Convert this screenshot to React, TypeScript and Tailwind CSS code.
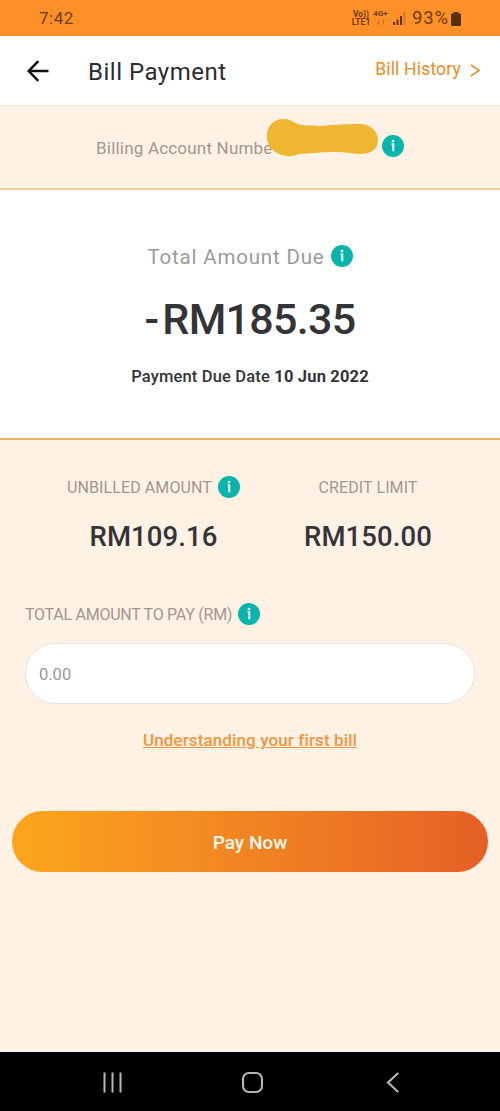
import { ReactNode } from "react";

function InfoIcon() {
  return (
    <svg className="h-[22px] w-[22px] shrink-0" viewBox="0 0 22 22" aria-label="More info">
      <circle cx="11" cy="11" r="11" fill="#08b5ad" />
      <circle cx="11" cy="6" r="1.35" fill="#fff" />
      <path d="M9.6 9.3H11.3V16.2" fill="none" stroke="#fff" strokeWidth="2" />
    </svg>
  );
}

function StatusBar() {
  return (
    <div className="flex h-9 items-center justify-between bg-[#ff9028] pr-[39px] pl-[39px] text-[#6d3d12]">
      <span className="text-[17px] leading-none tracking-[0.5px]">7:42</span>
      <div className="flex items-center">
        <div className="flex w-[18px] flex-col items-center text-[8.5px] leading-[8px] font-bold">
          <span>Vo))</span>
          <span>LTE1</span>
        </div>
        <div className="ml-[3px] flex w-[15px] flex-col items-center text-[8px] leading-[8px] font-bold">
          <span>4G+</span>
          <svg className="h-2 w-[10px]" viewBox="0 0 10 8" fill="none" stroke="#c97526">
            <path d="M2.5 1v5M.8 4.5l1.7 1.7 1.7-1.7M7.5 7V2M5.8 3.5l1.7-1.7 1.7 1.7" />
          </svg>
        </div>
        <svg className="mt-px ml-[5px] h-[13px] w-[13px]" viewBox="0 0 13 13">
          <path d="M0 10h2v3H0zM3.5 7.5h2V13h-2zM7 4h2v9H7z" fill="#5d3310" />
          <path d="M10.5 0h1.7v13h-1.7z" fill="#cf7725" />
        </svg>
        <span className="ml-[6px] w-[39px] text-[18.5px] leading-none tracking-[0.9px] whitespace-nowrap">93%</span>
        <svg className="mt-[2px] h-[14px] w-[10px]" viewBox="0 0 10 14">
          <path d="M2.5 0h5v1.5H9q1 0 1 1V13q0 1-1 1H1q-1 0-1-1V2.5q0-1 1-1h1.5z" fill="#56300d" />
        </svg>
      </div>
    </div>
  );
}

function Header() {
  return (
    <header className="flex h-[69px] items-center bg-white pr-5 pl-[27px]">
      <button aria-label="Back">
        <svg className="h-[22px] w-[22px]" viewBox="0 0 22 22" fill="none" stroke="#111" strokeWidth="2.5">
          <path d="M21.5 11H2M11.3 1.2 1.7 11l9.6 9.8" />
        </svg>
      </button>
      <h1 className="ml-[39px] pt-[3px] text-[24px] leading-none tracking-[0.5px] text-[#2b2b30]">Bill Payment</h1>
      <button className="ml-auto flex items-center gap-[9px] text-[17.5px] leading-none text-[#f08a22]">
        <span className="-mt-[2px] tracking-[0.18px]">Bill History</span>
        <svg className="h-[13px] w-[10px]" viewBox="0 0 10 13" fill="none" stroke="currentColor" strokeWidth="1.6">
          <path d="M.8.8 9 6.5.8 12.2" />
        </svg>
      </button>
    </header>
  );
}

function AccountNumber() {
  return (
    <section className="relative flex h-[85px] items-center border-t border-b-2 border-t-[#f3e7db] border-b-[#edcf9d] pt-[2px] pl-24">
      <span className="text-[17px] leading-none tracking-[0.2px] text-[#9f9790]">Billing Account Numbe</span>
      <svg className="absolute top-[12px] left-[266px] h-[39px] w-[112px]" viewBox="0 0 112 39">
        <path
          d="M1 20C0 9 7 1 17 1c6 0 10 2 14 5 7 2 14 1 22 2 13-1 25-2 41-2 10 0 18 7 18 16s-7 14-17 14c-8 0-15-2-24-2-13 0-24 1-38 2-9 4-18 2-25-3-4-3-7-8-7-13Z"
          fill="#efb632"
        />
      </svg>
      <div className="absolute top-[29px] left-[382px]">
        <InfoIcon />
      </div>
    </section>
  );
}

function AmountDue() {
  return (
    <section className="flex h-[250px] flex-col items-center border-b-2 border-[#e4b661] bg-white pt-[55px] text-[#333338]">
      <div className="flex items-center gap-[6px]">
        <span className="pt-[2px] text-[20.5px] leading-[20px] tracking-[0.82px] text-[#9a9a9c]">Total Amount Due</span>
        <InfoIcon />
      </div>
      <p className="mt-[30px] text-[43px] leading-[44px] font-medium tracking-[-0.7px]">
        <span className="mr-1">-</span>RM185.35
      </p>
      <p className="mt-[26px] text-[16.5px] leading-5 font-medium tracking-[0.17px]">
        Payment Due Date <b className="font-bold">10 Jun 2022</b>
      </p>
    </section>
  );
}

function Stat({ label, value, icon }: { label: string; value: string; icon?: ReactNode }) {
  return (
    <div className="flex flex-col items-center">
      <div className="flex h-[22px] items-center gap-[6px]">
        <span className="pt-px text-[16px] leading-none tracking-[0.1px] whitespace-nowrap text-[#9f9790]">{label}</span>
        {icon}
      </div>
      <p className="mt-[25px] text-[27.5px] leading-7 font-medium tracking-[0.1px] text-[#333338]">{value}</p>
    </div>
  );
}

export default function App() {
  return (
    <div className="flex h-[1111px] w-[500px] flex-col bg-[#fff1e3] font-[Roboto,sans-serif]">
      <StatusBar />
      <Header />
      <AccountNumber />
      <AmountDue />

      <main className="flex-1">
        <div className="flex justify-between pt-9 pr-[68px] pl-[67px]">
          <Stat label="UNBILLED AMOUNT" value="RM109.16" icon={<InfoIcon />} />
          <Stat label="CREDIT LIMIT" value="RM150.00" />
        </div>

        <div className="mt-[52px] flex items-center gap-[6px] pl-[25px]">
          <label htmlFor="amount" className="pt-px text-[16px] leading-none tracking-[-0.26px] text-[#9f9790]">
            TOTAL AMOUNT TO PAY (RM)
          </label>
          <InfoIcon />
        </div>
        <input
          id="amount"
          placeholder="0.00"
          className="mx-[25px] mt-[18px] block h-[61px] w-[450px] rounded-full border border-[#e8e2dc] bg-white px-[13px] pt-[2px] text-[16.5px] placeholder:text-[#9b9794]"
        />
        <div className="mt-[26px] flex justify-center">
          <a href="#" className="text-[17px] leading-5 font-medium tracking-[0.12px] text-[#f0953f] underline">
            Understanding your first bill
          </a>
        </div>
        <button className="mx-3 mt-[61px] block h-[61px] w-[476px] rounded-full bg-linear-to-r from-[#fba61c] to-[#e65f25] pt-[3px] text-[19px] font-medium text-[#fff8ec]">
          Pay Now
        </button>
      </main>

      <nav className="flex h-[59px] items-center bg-black pt-[2px] pl-[102px] text-[#b5b5b5]">
        <svg className="h-[21px] w-[21px]" viewBox="0 0 21 21" fill="none" stroke="currentColor" strokeWidth="2">
          <path d="M2.5.5v20M10.5.5v20M18.5.5v20" />
        </svg>
        <svg className="ml-[119px] h-[21px] w-[21px]" viewBox="0 0 22 22" fill="none" stroke="currentColor" strokeWidth="2.2">
          <rect x="1.1" y="1.1" width="19.8" height="19.8" rx="6" />
        </svg>
        <svg className="ml-[123px] h-[21px] w-[13px]" viewBox="0 0 13 21" fill="none" stroke="currentColor" strokeWidth="2.2">
          <path d="M12.2 1 2 10.5l10.2 9.5" />
        </svg>
      </nav>
    </div>
  );
}
